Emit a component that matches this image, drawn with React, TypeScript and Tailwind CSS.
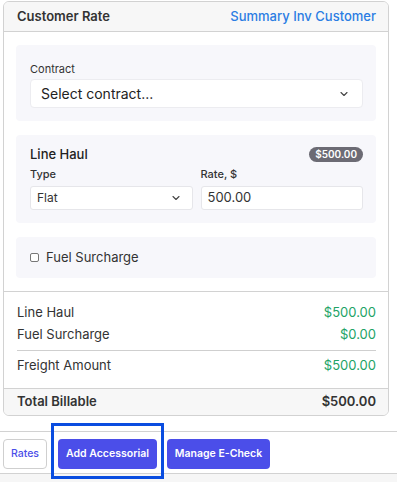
import React from "react";

function Chevron() {
  return (
    <svg width="12" height="12" viewBox="0 0 24 24" fill="none" stroke="#444" strokeWidth="2.2" strokeLinecap="round" strokeLinejoin="round">
      <path d="M6 9l6 6 6-6" />
    </svg>
  );
}

export default function App() {
  const font = { fontFamily: "Inter, 'Noto Sans', sans-serif" } as React.CSSProperties;
  return (
    <div className="w-[397px] h-[482px] bg-white text-[#333] overflow-hidden" style={font}>
      <div className="pt-[1px] pl-[3px] pr-[8px]">
        <div className="border border-[#d2d2d2] rounded-[6px] overflow-hidden">
          {/* header */}
          <div className="h-[30px] bg-[#f7f7f7] border-b border-[#d2d2d2] flex items-center justify-between pl-[13px] pr-[12px]">
            <span className="text-[13px] font-semibold text-[#333]">Customer Rate</span>
            <span className="text-[13px] font-medium text-[#2b7de3]">Summary Inv Customer</span>
          </div>
          {/* body */}
          <div className="pt-[13px] pb-[13px] pl-[12px] pr-[12px] flex flex-col gap-[14px] border-b border-[#d2d2d2]">
            <div className="bg-[#f7f7fb] rounded-[4px] pt-[17px] pb-[13px] pl-[14px] pr-[13px]">
              <div className="text-[11px] leading-[14px] font-normal text-[#333] mb-[3px]">Contract</div>
              <div className="h-[29px] bg-white rounded-[4px] border border-[#ececf0] flex items-center justify-between pl-[10px] pr-[12px]">
                <span className="text-[14px] text-[#222]">Select contract...</span>
                <Chevron />
              </div>
            </div>
            <div className="bg-[#f7f7fb] rounded-[4px] pt-[11px] pb-[13px] pl-[14px] pr-[13px]">
              <div className="flex items-center justify-between h-[17px]">
                <span className="text-[13px] font-medium text-[#222]">Line Haul</span>
                <span className="bg-[#6c6b74] text-white text-[10px] font-semibold rounded-full px-[6px] h-[15px] leading-[15px]">$500.00</span>
              </div>
              <div className="grid grid-cols-2 gap-[8px] mt-[4px]">
                <div>
                  <div className="text-[11px] leading-[14px] font-medium text-[#333] mb-[5px]">Type</div>
                  <div className="h-[24px] bg-white rounded-[3px] border border-[#e6e6ea] flex items-center justify-between pl-[6px] pr-[10px]">
                    <span className="text-[12px] text-[#333]">Flat</span>
                    <Chevron />
                  </div>
                </div>
                <div>
                  <div className="text-[11px] leading-[14px] font-medium text-[#333] mb-[5px]">Rate, $</div>
                  <div className="h-[24px] bg-white rounded-[3px] border border-[#e6e6ea] flex items-center pl-[6px]">
                    <span className="text-[13px] text-[#333]">500.00</span>
                  </div>
                </div>
              </div>
            </div>
            <div className="bg-[#f7f7fb] rounded-[4px] h-[41px] flex items-center pl-[14px]">
              <span className="w-[9px] h-[9px] border border-[#777] rounded-[2px] bg-white mr-[7px]" />
              <span className="text-[13px] text-[#333]">Fuel Surcharge</span>
            </div>
          </div>
          {/* summary */}
          <div className="pt-[10px] pb-[11px] pl-[13px] pr-[12px]">
            <div className="h-[22px] flex items-center justify-between text-[13px]">
              <span className="text-[#333]">Line Haul</span>
              <span className="text-[#21a366]">$500.00</span>
            </div>
            <div className="h-[22px] flex items-center justify-between text-[13px]">
              <span className="text-[#333]">Fuel Surcharge</span>
              <span className="text-[#21a366]">$0.00</span>
            </div>
            <div className="border-t border-[#cfcfcf] mt-[4px] mb-[4px]" />
            <div className="h-[22px] flex items-center justify-between text-[13px]">
              <span className="text-[#333]">Freight Amount</span>
              <span className="text-[#21a366]">$500.00</span>
            </div>
          </div>
          <div className="h-[27px] bg-[#f7f7f7] border-t border-[#d2d2d2] flex items-center justify-between pl-[13px] pr-[12px] text-[13px] font-semibold text-[#333]">
            <span>Total Billable</span>
            <span>$500.00</span>
          </div>
        </div>
      </div>
      {/* footer */}
      <div className="mt-[15px] border-t border-[#d2d2d2] pt-[7px] pb-[4px] pl-[3px] flex items-center">
        <button className="h-[30px] w-[44px] bg-white border border-[#cfcfcf] rounded-[4px] text-[10.5px] font-medium text-[#4b4ee9]">Rates</button>
        <div className="relative ml-[11px]">
          <button className="h-[30px] w-[99px] bg-[#4b4ee9] rounded-[4px] text-[10.5px] font-semibold text-white">Add Accessorial</button>
          <div className="absolute left-[-7px] right-[-7px] top-[-16px] bottom-[-10px] border-[3px] border-[#0a4de0] pointer-events-none" />
        </div>
        <button className="ml-[10px] h-[30px] w-[103px] bg-[#4b4ee9] rounded-[4px] text-[10.5px] font-semibold text-white">Manage E-Check</button>
      </div>
      <div className="border-t border-[#d2d2d2] bg-[#f6f6f6] h-[20px]" />
    </div>
  );
}
